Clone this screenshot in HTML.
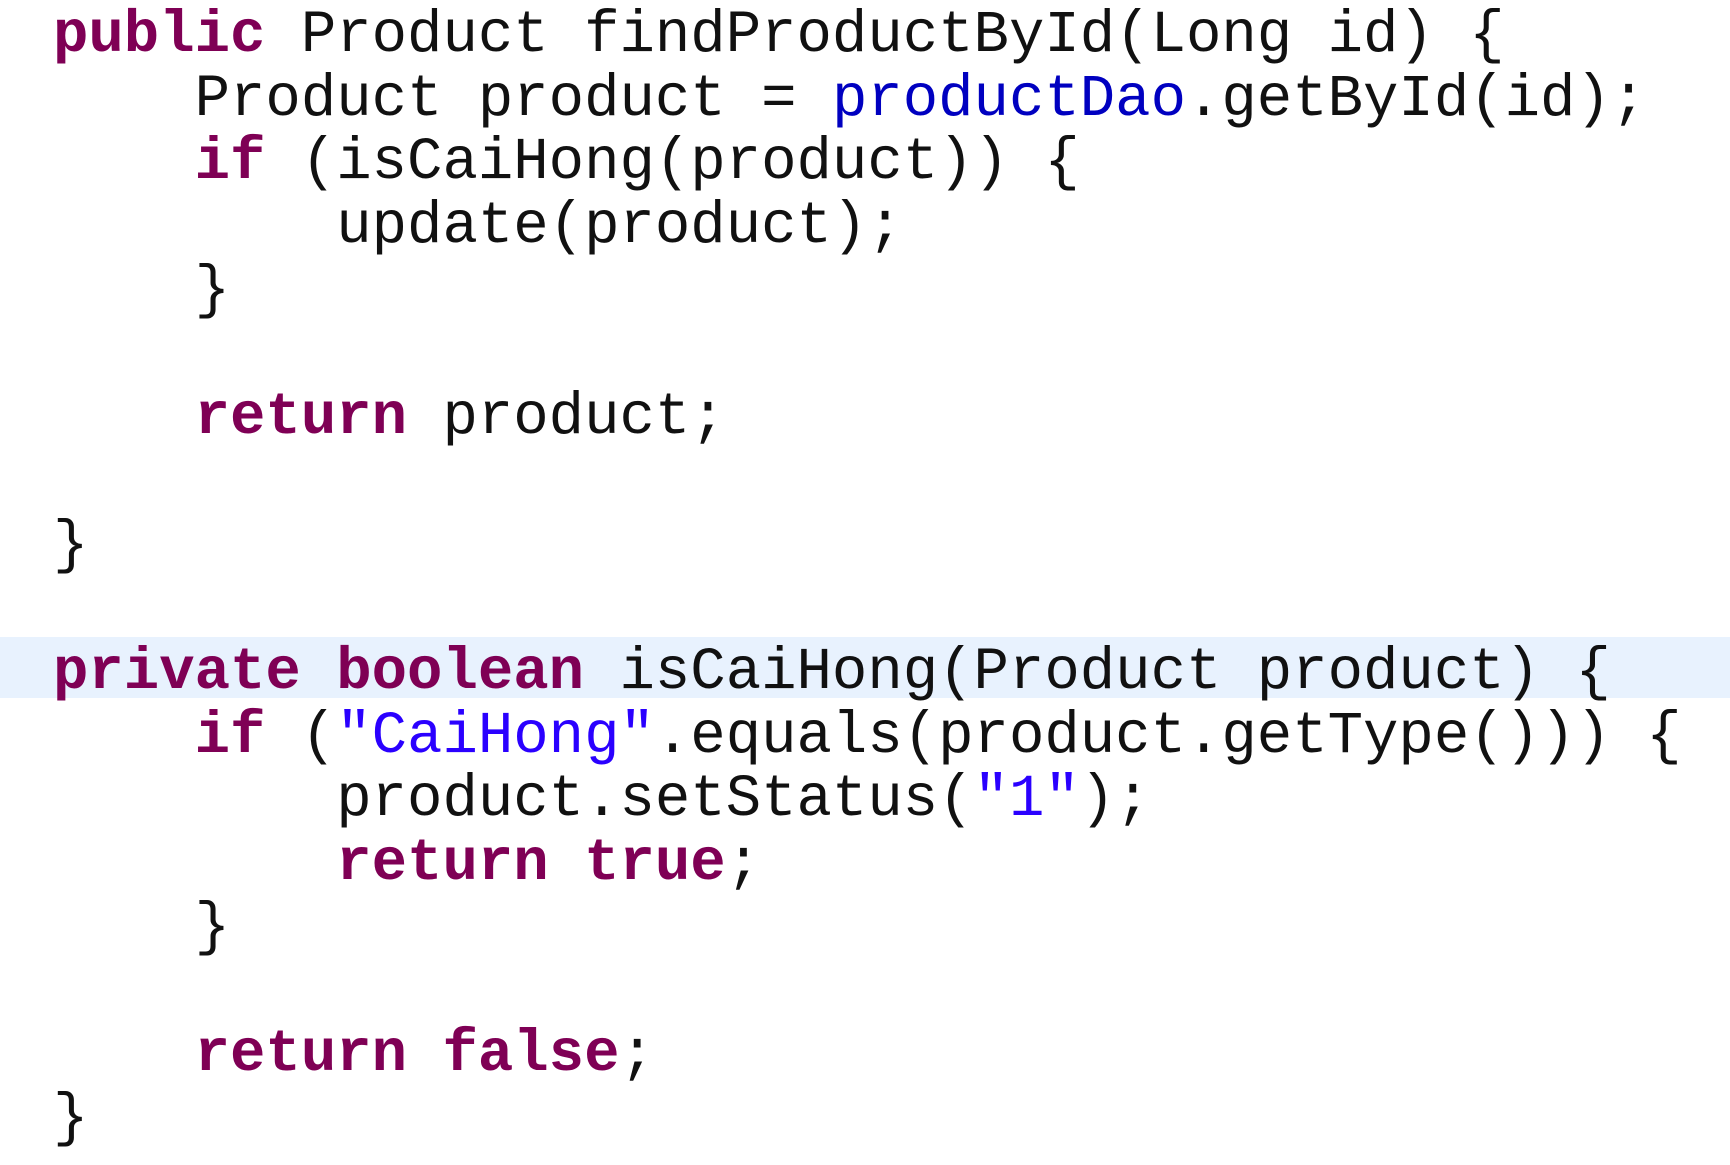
<!DOCTYPE html>
<html><head><meta charset="utf-8"><style>
html,body{margin:0;padding:0;background:#fff;width:1730px;height:1165px;overflow:hidden}
pre{margin:0;position:absolute;top:4px;left:53px;font-family:"Liberation Mono","DejaVu Sans Mono",monospace;font-size:59px;line-height:63.7px;color:#111}
.k{color:#7f0055;font-weight:bold}
.s{color:#2a00ff}
.f{color:#0000c0}
.hl{position:absolute;left:0;top:637px;width:1730px;height:61px;background:#e8f2fe}
</style></head><body>
<div class="hl"></div>
<pre><span class="k">public</span> Product findProductById(Long id) {
    Product product = <span class="f">productDao</span>.getById(id);
    <span class="k">if</span> (isCaiHong(product)) {
        update(product);
    }

    <span class="k">return</span> product;

}

<span class="k">private</span> <span class="k">boolean</span> isCaiHong(Product product) {
    <span class="k">if</span> (<span class="s">"CaiHong"</span>.equals(product.getType())) {
        product.setStatus(<span class="s">"1"</span>);
        <span class="k">return</span> <span class="k">true</span>;
    }

    <span class="k">return</span> <span class="k">false</span>;
}</pre>
</body></html>
